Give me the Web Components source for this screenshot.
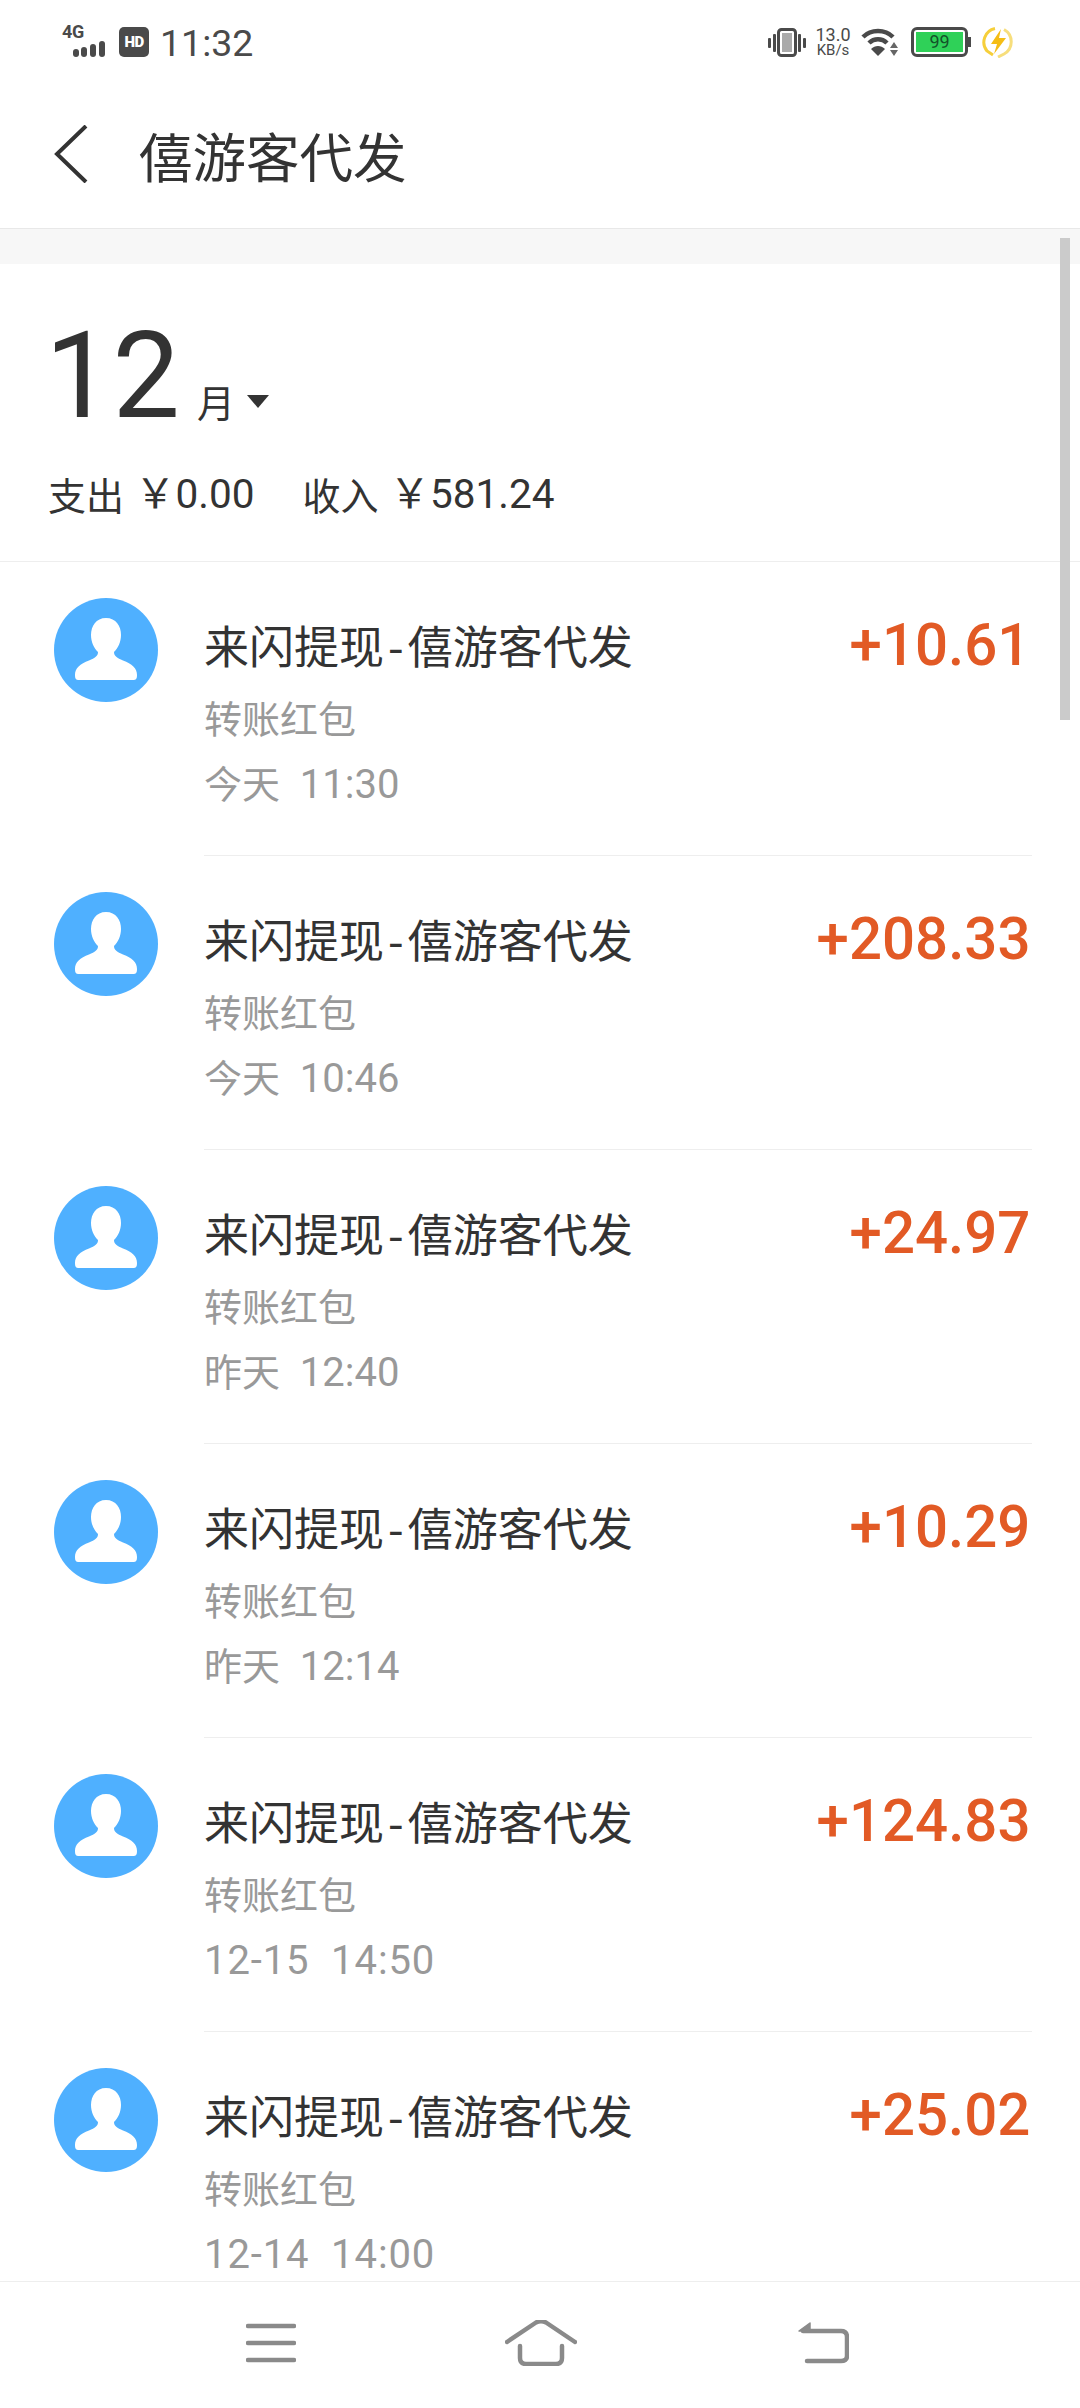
<!DOCTYPE html>
<html lang="zh">
<head>
<meta charset="utf-8">
<title>僖游客代发</title>
<style>
  html, body { margin: 0; height: 100%; background: #fff; }
  body { font-family: Roboto, "Noto Sans CJK SC", sans-serif; color: #333; }
  app-screen { height: 2408px; }
</style>
</head>
<body>
<app-screen>
  <status-bar slot="top"></status-bar>
  <title-bar slot="top">僖游客代发</title-bar>
  <month-summary month="12" out="￥0.00" in="￥581.24"></month-summary>
  <bill-row amount="+10.61" when="今天  11:30"></bill-row>
  <bill-row amount="+208.33" when="今天  10:46"></bill-row>
  <bill-row amount="+24.97" when="昨天  12:40"></bill-row>
  <bill-row amount="+10.29" when="昨天  12:14"></bill-row>
  <bill-row amount="+124.83" when="12-15  14:50"></bill-row>
  <bill-row amount="+25.02" when="12-14  14:00"></bill-row>
  <nav-bar slot="bottom"></nav-bar>
</app-screen>

<script>
class AppScreen extends HTMLElement {
  constructor () {
    super()
    this.attachShadow({ mode: 'open' }).innerHTML = `
    <style>
      :host { display: flex; flex-direction: column; width: 1080px; overflow: hidden; background: #fff; position: relative; }
      .band { height: 35px; flex: none; background: #f7f7f7; }
      main { flex: 1; min-height: 0; overflow: hidden; }
      .thumb { position: absolute; right: 10px; top: 238px; width: 10px; height: 482px; background: #cbcbcb; }
    </style>
    <slot name="top"></slot>
    <div class="band"></div>
    <main><slot></slot></main>
    <div class="thumb"></div>
    <slot name="bottom"></slot>`
  }
}

class StatusBar extends HTMLElement {
  constructor () {
    super()
    this.attachShadow({ mode: 'open' }).innerHTML = `
    <style>
      :host { display: flex; height: 84px; flex: none; align-items: flex-start; justify-content: space-between; padding: 25px 66px 0 62px; box-sizing: border-box; color: #4a4a4a; font-family: Roboto, sans-serif; }
      .side { display: flex; align-items: flex-start; }
      .net { width: 48px; height: 32px; position: relative; }
      .net b { position: absolute; left: 0; top: -3px; font-size: 18px; line-height: 20px; font-weight: 700; letter-spacing: -.3px; }
      .net svg { position: absolute; left: 0; top: 0; }
      .hd { margin: 2px 0 0 9px; width: 30px; height: 30px; border-radius: 5px; background: #4a4a4a; color: #fff; font-size: 15px; font-weight: 900; line-height: 30px; text-align: center; letter-spacing: -.5px; }
      .time { margin-left: 11px; font-size: 37.5px; line-height: 36px; }
      .speed { margin: 2px 0 0 6px; width: 42px; font-size: 18px; line-height: 16px; text-align: center; }
      .speed small { display: block; font-size: 15px; line-height: 14px; }
      .batt { margin: 2px 0 0 12px; height: 30px; width: 57px; box-sizing: border-box; border: 3px solid #4a4a4a; border-radius: 6px; position: relative; }
      .batt span { display: block; margin: 2px; height: 20px; line-height: 20px; background: #2fd158; color: #14532a; font-size: 18px; text-align: center; }
      .batt::after { content: ""; position: absolute; right: -6px; top: 7px; width: 3px; height: 10px; background: #4a4a4a; }
    </style>
    <div class="side">
      <div class="net">
        <b>4G</b>
        <svg width="46" height="32" viewBox="0 0 46 32" fill="#4a4a4a">
          <rect x="11" y="24" width="6" height="8" rx="3"/>
          <rect x="19" y="22" width="6" height="10" rx="3"/>
          <rect x="28" y="19" width="6" height="13" rx="3"/>
          <rect x="37" y="16" width="6" height="16" rx="3"/>
        </svg>
      </div>
      <div class="hd">HD</div>
      <div class="time">11:32</div>
    </div>
    <div class="side">
      <svg width="38" height="30" viewBox="0 0 38 30" style="margin:3px 0 0 2px" fill="#4a4a4a">
        <rect x="0" y="10" width="3" height="10" rx="1"/>
        <rect x="5" y="6" width="3" height="18" rx="1"/>
        <rect x="30" y="6" width="3" height="18" rx="1"/>
        <rect x="35" y="10" width="3" height="10" rx="1"/>
        <rect x="10.5" y="1.5" width="17" height="26" rx="3" fill="#fff" stroke="#4a4a4a" stroke-width="3"/>
        <rect x="14" y="5" width="10" height="19" fill="#aaa"/>
      </svg>
      <div class="speed">13.0<small>KB/s</small></div>
      <svg width="38" height="30" viewBox="0 0 38 30" style="margin:3px 0 0 7px">
        <g fill="none" stroke="#4a4a4a" stroke-width="4.5">
          <path d="M2 9 C10 1 24 1 32 9"/>
          <path d="M8 15 C13 10 21 10 26 15"/>
        </g>
        <path d="M17 28 L10 21 C14 17 20 17 24 21 Z" fill="#4a4a4a"/>
        <path d="M33 14 L37 20 H29 Z M29 22 H37 L33 28 Z" fill="#666"/>
      </svg>
      <div class="batt"><span>99</span></div>
      <svg width="32" height="32" viewBox="0 0 32 32" style="margin:1px 0 0 14px">
        <path d="M22 3.5 A14 14 0 0 1 22 28 L16 31" fill="none" stroke="#f7de7c" stroke-width="3"/>
        <path d="M13 2.5 A14 14 0 0 0 5 25 L11 29" fill="none" stroke="#f6cf3a" stroke-width="3"/>
        <path d="M19 3 L9 18 H15 L12 28 L24 12 H17 Z" fill="#f5bd14"/>
      </svg>
    </div>`
  }
}

class TitleBar extends HTMLElement {
  constructor () {
    super()
    this.attachShadow({ mode: 'open' }).innerHTML = `
    <style>
      :host { display: flex; align-items: center; height: 145px; flex: none; box-sizing: border-box; padding: 0 0 4px 53px; border-bottom: 1px solid #e8e8e8; font-family: "Noto Sans CJK SC", sans-serif; font-size: 53.5px; color: #333; }
      svg { flex: none; margin-right: 50px; }
    </style>
    <svg width="36" height="58" viewBox="0 0 36 58" fill="none" stroke="#333" stroke-width="4"><path d="M33 1 L4 29 L33 57"/></svg>
    <slot></slot>`
  }
}

class MonthSummary extends HTMLElement {
  constructor () {
    super()
    this.attachShadow({ mode: 'open' }).innerHTML = `
    <style>
      :host { display: block; height: 298px; box-sizing: border-box; padding: 53px 0 0 45px; border-bottom: 1px solid #eee; color: #333; font-family: Roboto, "Noto Sans CJK SC", sans-serif; }
      .month { display: flex; align-items: baseline; height: 118px; }
      .num { font-size: 120px; line-height: 118px; }
      .unit { font-size: 38px; margin-left: 17px; font-family: "Noto Sans CJK SC", sans-serif; }
      .caret { width: 0; height: 0; margin-left: 12px; border: 11px solid transparent; border-top: 13px solid #333; border-bottom: 0; align-self: center; position: relative; top: 25px; }
      .totals { display: flex; gap: 48px; margin: 37px 0 0 3px; font-size: 40.5px; line-height: 44px; }
      .totals span { display: flex; gap: 11px; }
      i { font-style: normal; font-size: 38px; font-family: "Noto Sans CJK SC", sans-serif; }
    </style>
    <div class="month"><span class="num">${this.getAttribute('month')}</span><span class="unit">月</span><span class="caret"></span></div>
    <div class="totals">
      <span><i>支出</i>${this.getAttribute('out')}</span>
      <span><i>收入</i>${this.getAttribute('in')}</span>
    </div>`
  }
}

class BillRow extends HTMLElement {
  constructor () {
    super()
    const when = this.getAttribute('when')
    const dated = /^\d/.test(when)
    this.attachShadow({ mode: 'open' }).innerHTML = `
    <style>
      :host { display: flex; height: 294px; padding-left: 54px; box-sizing: border-box; font-family: "Noto Sans CJK SC", sans-serif; }
      svg { flex: none; margin: 36px 46px 0 0; }
      .body { flex: none; width: 828px; box-sizing: border-box; padding-top: 53px; border-bottom: 1px solid #eee; position: relative; }
      .title { font-size: 45px; line-height: 60px; color: #333; }
      .title span { margin: 0 4px; }
      .sub, .when { font-size: 38px; line-height: 50px; color: #999; white-space: pre; }
      .sub { margin-top: 17px; }
      .when { margin-top: 18px; font-size: 40px; font-family: Roboto, "Noto Sans CJK SC", sans-serif; }
      .when.dated { letter-spacing: .9px; }
      .when i { font-style: normal; font-size: 38px; }
      .amt { position: absolute; right: 2px; top: 48px; font-family: Roboto, sans-serif; font-weight: 500; font-size: 60px; line-height: 70px; color: #e25a25; transform: scaleX(.97); transform-origin: right center; }
    </style>
    <svg width="104" height="104" viewBox="0 0 104 104">
      <circle cx="52" cy="52" r="52" fill="#4fb0ff"/>
      <path d="M52 20 C62 20 67 28 67 37 C67 44 64 50 60 54 C60 58 63 60 69 62.5 C78 66 83 70 83 77 C83 81 82 82 79 82 H25 C22 82 21 81 21 77 C21 70 26 66 35 62.5 C41 60 44 58 44 54 C40 50 37 44 37 37 C37 28 42 20 52 20 Z" fill="#fff"/>
    </svg>
    <div class="body">
      <div class="title">来闪提现<span>-</span>僖游客代发</div>
      <div class="sub">转账红包</div>
      <div class="when${dated ? ' dated' : ''}">${when.replace(/[今昨]天/, '<i>$&</i>')}</div>
      <div class="amt">${this.getAttribute('amount')}</div>
    </div>`
  }
}

class NavBar extends HTMLElement {
  constructor () {
    super()
    this.attachShadow({ mode: 'open' }).innerHTML = `
    <style>
      :host { display: grid; grid-template-columns: 270px 270px 294px; height: 127px; flex: none; box-sizing: border-box; padding: 0 0 4px 136px; border-top: 1px solid #eee; background: #fff; align-items: center; }
      div { display: flex; justify-content: center; }
      svg { fill: none; stroke: #8a8a8a; stroke-width: 4.5; stroke-linecap: round; stroke-linejoin: round; }
    </style>
    <div><svg width="50" height="42" viewBox="0 0 50 42"><path d="M2 4 H48 M2 21 H48 M2 38 H48"/></svg></div>
    <div><svg width="72" height="46" viewBox="0 0 72 46"><path d="M2 22 L31 2.5 Q36 0 41 2.5 L70 22 M15 26 V38 Q15 44 21 44 H51 Q57 44 57 38 V26"/></svg></div>
    <div><svg width="52" height="42" viewBox="0 0 52 42"><path d="M6 9 H44 Q50 9 50 15 V34 Q50 39 44 39 H10"/><path d="M2 9 L13 1 V9 Z" fill="#8a8a8a" stroke-width="1.5"/></svg></div>`
  }
}

customElements.define('app-screen', AppScreen)
customElements.define('status-bar', StatusBar)
customElements.define('title-bar', TitleBar)
customElements.define('month-summary', MonthSummary)
customElements.define('bill-row', BillRow)
customElements.define('nav-bar', NavBar)
</script>
</body>
</html>
